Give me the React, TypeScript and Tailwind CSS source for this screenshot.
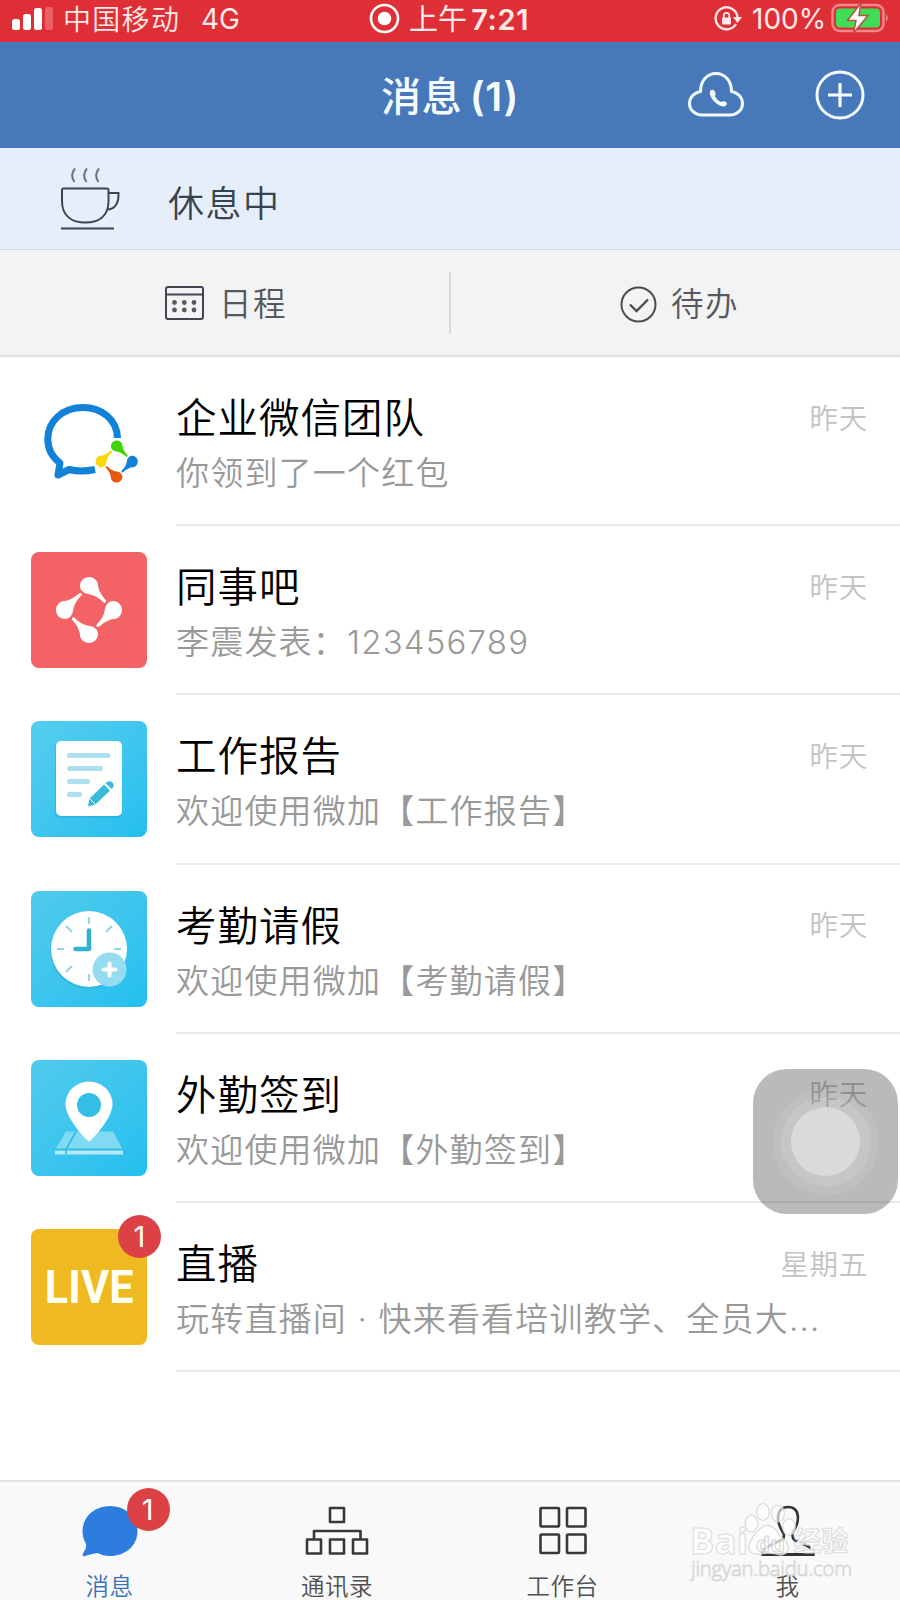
import type { ReactNode } from 'react'

type Chat = {
  title: string
  text: string
  time: string
  avatar: ReactNode
  badge?: number
}

const DROP = 'M0 -33 C5 -33 9 -29 9 -25 C9.500 -19 13 -14.500 16.800 -9.800 C17.800 -8 16 -6.300 14.500 -7.700 C10 -12.500 5 -15 0 -15.800 C-5 -16.500 -9 -19.500 -9 -24 C-9 -29 -5 -33 0 -33Z'

function TeamLogo() {
  return (
    <svg width="116" height="116" viewBox="0 0 116 116">
      <path d="M86.500 55 C86 36 70 24.500 52 24.500 C32 24.500 16.800 38 16.800 56 C16.800 66 21 74 29 80 L27 92 L38 86.500 Q50 89.500 64 86.500" fill="none" stroke="#1282d8" strokeWidth="7" strokeLinejoin="round" />
      <g transform="translate(85.700 78.500) scale(0.640)">
        <path d={DROP} fill="#3fd30a" />
        <path d={DROP} fill="#1282d8" transform="rotate(90)" />
        <path d={DROP} fill="#e8590f" transform="rotate(180)" />
        <path d={DROP} fill="#fbd80e" transform="rotate(270)" />
      </g>
    </svg>
  )
}

function ColleagueLogo() {
  return (
    <svg width="116" height="116" viewBox="0 0 116 116" className="rounded-lg bg-[#f36366]">
      <g fill="#fff" transform="translate(58 58)">
        <path d={DROP} />
        <path d={DROP} transform="rotate(90)" />
        <path d={DROP} transform="rotate(180)" />
        <path d={DROP} transform="rotate(270)" />
      </g>
    </svg>
  )
}

function ReportLogo() {
  return (
    <svg width="116" height="116" viewBox="0 0 116 116" className="rounded-lg bg-linear-to-br from-[#55cdee] to-[#22bfee]">
      <rect x="24" y="21" width="66" height="76" rx="5" fill="#1795bd" opacity="0.3" />
      <rect x="25" y="20" width="66" height="75" rx="5" fill="#fff" />
      <g stroke="#ace0ee" strokeWidth="5" strokeLinecap="round">
        <path d="M38.500 34.500H77M38.500 47.500H69.500M38.500 60.500H56.500M38.500 73.500H48.500" />
      </g>
      <path d="M57 85.500 L58.500 77.500 L73 63.500 L79 69.500 L64.500 83.500Z M74.500 62 q4.500 -3.500 7.500 0 q2 3.500 -1.500 6z" fill="#3bb9d8" />
      <path d="M58.500 77.500 l6 6" stroke="#fff" strokeWidth="1" />
    </svg>
  )
}

function ClockLogo() {
  return (
    <svg width="116" height="116" viewBox="0 0 116 116" className="rounded-lg bg-linear-to-br from-[#50cbed] to-[#22bfee]">
      <circle cx="57" cy="60" r="38" fill="#1795bd" opacity="0.25" />
      <circle cx="58" cy="58" r="38" fill="#fff" />
      <path d="M58 26v7M58 83v7M26 58h7M83 58h7M35 35l6 6M81 35l-6 6M35 81l6 -6" stroke="#8fd3e6" strokeWidth="1.800" />
      <path d="M58 39.500V58H44.500" fill="none" stroke="#2fb1d3" strokeWidth="4.500" strokeLinecap="round" strokeLinejoin="round" />
      <circle cx="78.500" cy="78.500" r="17" fill="#96dcf1" />
      <path d="M78.500 72.500v12M72.500 78.500h12" stroke="#fff" strokeWidth="4" strokeLinecap="round" />
    </svg>
  )
}

function PinLogo() {
  return (
    <svg width="116" height="116" viewBox="0 0 116 116" className="rounded-lg bg-linear-to-br from-[#50cbed] to-[#22bfee]">
      <path d="M35 71.500 H82 L92 90 V94 H24 V90Z" fill="#82daf2" />
      <path d="M24 90.500H92V94.500H24Z" fill="#b5e9f7" />
      <path d="M24 89.500H92M45 71.500L35 89.500V94.500" fill="none" stroke="#35bfe4" strokeWidth="1.800" />
      <path d="M58 81.500 C54 79 34.500 58 34.500 44 A23.500 22.500 0 0 1 81.500 44 C81.500 58 62 79 58 81.500Z" fill="#fff" />
      <circle cx="58" cy="45" r="12" fill="#35bfe4" />
    </svg>
  )
}

function LiveLogo() {
  return (
    <div className="flex size-[116px] items-center justify-center rounded-lg bg-[#eeb921] font-[Roboto,sans-serif] text-[47px] font-bold text-[#fffff4]">
      <span className="scale-x-[0.920]">LIVE</span>
    </div>
  )
}

const chats: Chat[] = [
  { title: '企业微信团队', text: '你领到了一个红包', time: '昨天', avatar: <TeamLogo /> },
  { title: '同事吧', text: '李震发表：123456789', time: '昨天', avatar: <ColleagueLogo /> },
  { title: '工作报告', text: '欢迎使用微加【工作报告】', time: '昨天', avatar: <ReportLogo /> },
  { title: '考勤请假', text: '欢迎使用微加【考勤请假】', time: '昨天', avatar: <ClockLogo /> },
  { title: '外勤签到', text: '欢迎使用微加【外勤签到】', time: '昨天', avatar: <PinLogo /> },
  { title: '直播', text: '玩转直播间 · 快来看看培训教学、全员大...', time: '星期五', avatar: <LiveLogo />, badge: 1 },
]

function Badge({ count }: { count: number }) {
  return (
    <span className="flex size-[43px] items-center justify-center rounded-full bg-[#dc4145] text-[29px] leading-none font-normal text-white">
      {count}
    </span>
  )
}

function StatusBar() {
  return (
    <div className="flex h-[42px] items-center bg-[#de2f37] text-[28px] leading-[38px] text-[#ffe9e9]">
      <svg width="42" height="24" viewBox="0 0 42 24" className="-mt-1 ml-3 shrink-0">
        <rect y="12" width="8" height="11" rx="2.500" fill="#fff" />
        <rect x="11" y="7" width="8" height="16" rx="2.500" fill="#fff" />
        <rect x="22" y="1" width="8" height="22" rx="2.500" fill="#fff" />
        <rect x="33" y="0" width="8" height="23" rx="2.500" fill="#e96166" />
      </svg>
      <span className="-mt-0.5 ml-[9px] w-[138px] shrink-0 font-[350] tracking-[1.300px] whitespace-nowrap">中国移动</span>
      <span className="-mt-1 w-[168px] shrink-0">4G</span>
      <svg width="31" height="31" viewBox="0 0 31 31" className="-mt-1.5 shrink-0">
        <circle cx="15.500" cy="15.500" r="13.500" fill="none" stroke="#fff" strokeWidth="2.600" />
        <circle cx="15.500" cy="15.500" r="6.800" fill="#fff" />
      </svg>
      <span className="-mt-0.5 ml-[9px] w-[309px] shrink-0 text-[29px] font-normal whitespace-nowrap">上午 <span className="-ml-1 font-semibold tracking-[0.700px]">7:21</span></span>
      <svg width="28" height="26" viewBox="0 0 28 26" className="-mt-1 -ml-1 shrink-0">
        <path d="M22 18 A11 11 0 1 1 23.500 11" fill="none" stroke="#ffe9e9" strokeWidth="2.300" />
        <path d="M19 11h9l-4.500 6z" fill="#ffe9e9" />
        <rect x="8" y="11.500" width="9" height="7" rx="1" fill="#ffe9e9" />
        <path d="M9.800 12V9.500a2.700 2.700 0 0 1 5.400 0V12" fill="none" stroke="#ffe9e9" strokeWidth="1.800" />
      </svg>
      <span className="-mt-1 ml-2.5 w-[79px] shrink-0">100%</span>
      <svg width="58" height="30" viewBox="0 0 58 30" className="-mt-1.5 shrink-0">
        <rect x="1.500" y="2" width="51" height="26" rx="7" fill="none" stroke="#f0878a" strokeWidth="2.500" />
        <rect x="5" y="5.500" width="44" height="19" rx="4" fill="#40de57" />
        <path d="M55 11 q3.500 4 0 8z" fill="#f0878a" />
        <path d="M30 0 L16.500 17.500H25L22.500 30L37 12.500H28Z" fill="#fff" stroke="#bd5140" strokeWidth="1.500" />
      </svg>
    </div>
  )
}

function Header() {
  return (
    <div className="grid h-[106px] grid-cols-[225px_1fr_225px] items-center bg-[#4778ba] text-[#f4fcff]">
      <span />
      <h1 className="pt-1 text-center text-[40px] leading-[60px] font-medium tracking-[0.700px]">消息 <span className="-ml-1 font-semibold">(1)</span></h1>
      <div className="flex items-center">
        <svg width="58" height="46" viewBox="0 0 58 46" fill="none" className="ml-3">
          <path d="M15 43H43 C50 43 55.500 38 55.500 31.500 C55.500 25 50.500 20.500 44.500 19.500 C44.500 9 38 1.500 29 1.500 C20 1.500 13.500 9 13.500 19.500 C7.500 20.500 2.500 25 2.500 31.500 C2.500 38 8 43 15 43Z" stroke="#f2fbff" strokeWidth="3" strokeLinejoin="round" />
          <path d="M23.500 18.500 Q26 16.500 28 19.500 Q29 22 28 24.500 Q30 28.500 34 30 Q36.500 28.500 39 30 Q41 32 38.500 34 Q35.500 35.500 31 32.500 Q25.500 29 23.500 24 Q22 20.500 23.500 18.500Z" fill="#f2fbff" />
        </svg>
        <svg width="50" height="50" viewBox="0 0 50 50" fill="none" stroke="#f2fbff" className="-mt-px ml-[70px]">
          <circle cx="25" cy="25" r="23" strokeWidth="3" />
          <path d="M25 13V37M13 25H37" strokeWidth="3.200" />
        </svg>
      </div>
    </div>
  )
}

function Tabs() {
  return (
    <div className="flex h-[107px] items-center border-b-2 border-[#dfdfdf] bg-[#f3f3f3] text-[32.500px] leading-[48px] font-[350] tracking-[1.500px] text-[#55585e]">
      <div className="flex h-[62px] w-[451px] items-center border-r-2 border-[#dadada] pl-[165px]">
        <svg width="39" height="34" viewBox="0 0 39 34" fill="none" stroke="#414550" strokeWidth="2" className="mr-[15px]">
          <rect x="1" y="1" width="37" height="32" rx="2" />
          <path d="M1 8.500H38" />
          <g fill="#555a62" stroke="none">
            <circle cx="9.500" cy="16.500" r="2.400" /><circle cx="19.300" cy="16.500" r="2.400" /><circle cx="29" cy="16.500" r="2.400" />
            <circle cx="9.500" cy="24" r="2.400" /><circle cx="19.300" cy="24" r="2.400" /><circle cx="29" cy="24" r="2.400" />
          </g>
        </svg>
        <span className="pt-[5px]">日程</span>
      </div>
      <div className="flex flex-1 items-center pl-[169px]">
        <svg width="37" height="37" viewBox="0 0 37 37" fill="none" stroke="#494c51" strokeWidth="2" className="mt-[3px] mr-[14px]">
          <circle cx="18.500" cy="18.500" r="17" />
          <path d="M10 18.500L16.500 25L28 13.500" strokeWidth="2.300" />
        </svg>
        <span className="pt-[5px]">待办</span>
      </div>
    </div>
  )
}

function ChatRow({ chat }: { chat: Chat }) {
  return (
    <div className="flex h-[169.200px] pl-[31px]">
      <div className="relative mt-[26px] size-[116px] shrink-0">
        {chat.avatar}
        {chat.badge && <div className="absolute -top-[14px] -right-[14px]"><Badge count={chat.badge} /></div>}
      </div>
      <div className="ml-[29px] flex-1 border-b-2 border-[#ebebeb] pt-[32px]">
        <div className="flex items-center justify-between pr-[32px]">
          <h2 className="text-[40.500px] leading-[60px] font-[350] tracking-[1px] text-black">{chat.title}</h2>
          <span className="text-[28.500px] font-[350] tracking-[0.700px] text-[#c3c3c3]">{chat.time}</span>
        </div>
        <p className="-mt-0.5 text-[33px] leading-[52px] font-[350] tracking-[1.200px] whitespace-nowrap text-[#999]">{chat.text}</p>
      </div>
    </div>
  )
}

function Watermark() {
  return (
    <div className="pointer-events-none absolute bottom-0 left-[688px] h-[100px] w-[168px] font-[Open_Sans,sans-serif] opacity-90">
      <svg width="168" height="100" viewBox="0 0 168 100" fill="#fff" stroke="#d9d9d9" strokeWidth="1.300" className="absolute">
        <ellipse cx="63.500" cy="23.500" rx="6.300" ry="8.300" fillOpacity="0.800" />
        <ellipse cx="75" cy="12" rx="6.300" ry="8.300" fillOpacity="0.800" />
        <ellipse cx="90" cy="13.500" rx="6.500" ry="8.300" fillOpacity="0.700" />
        <ellipse cx="101" cy="27" rx="6.300" ry="8.300" fillOpacity="0.800" />
        <path d="M70 31 Q79 20 88 30 Q91 36 98 41 Q104 53 93 55 Q81 52 73 54 Q60 56 61 45 Q63 38 70 31Z" fillOpacity="0.800" />
      </svg>
      <span className="absolute top-[15px] left-[2px] text-[36px] leading-[52px] font-bold text-white [-webkit-text-stroke:1px_#d8d8d8]">Bai</span>
      <span className="absolute top-[26px] left-[68px] text-[22px] leading-[34px] font-bold text-white [-webkit-text-stroke:1px_#cfcfcf]">du</span>
      <span className="absolute top-[20px] left-[106px] font-['Noto_Sans_CJK_SC',sans-serif] text-[27px] leading-[40px] font-bold whitespace-nowrap text-white [-webkit-text-stroke:1px_#d8d8d8]">经验</span>
      <span className="absolute top-[53px] left-[3px] text-[20.300px] leading-[30px] tracking-[-0.200px] whitespace-nowrap text-white [-webkit-text-stroke:0.800px_#d2d2d2]">jingyan.baidu.com</span>
    </div>
  )
}

function BottomNav() {
  return (
    <nav className="relative mt-auto grid h-[120px] grid-cols-4 border-t-2 border-[#e3e3e3] bg-[#f9f9f9] text-[23.500px] leading-[36px] font-[350] tracking-[0.500px] text-[#505050]">
      <div className="flex flex-col items-center pt-[23px] pr-1.5 text-[#3a72b8]">
        <div className="relative">
          <svg width="56" height="52" viewBox="0 0 56 52" className="mb-[12px]">
            <path d="M28 1 C43.500 1 55.500 12 55.500 26 C55.500 41 43 51 28 51 Q21 51 15.500 48 Q9 49 3 51 Q-.5 52 1 48.500 Q5 43 4 39 Q.5 33 .5 26 C.5 12 12.500 1 28 1Z" fill="#2c7ddd" />
          </svg>
          <div className="absolute -top-[17px] left-[45px]"><Badge count={1} /></div>
        </div>
        消息
      </div>
      <div className="flex flex-col items-center pt-[23px] pr-px">
        <svg width="64" height="52" viewBox="0 0 64 52" fill="none" stroke="#383838" strokeWidth="2.600" strokeLinejoin="round" className="mb-[12px]">
          <rect x="25" y="3" width="14" height="14" />
          <rect x="2" y="34.500" width="14" height="14" />
          <rect x="25" y="34.500" width="14" height="14" />
          <rect x="48" y="34.500" width="14" height="14" />
          <path d="M9 34V26H55.500V34" />
        </svg>
        通讯录
      </div>
      <div className="flex flex-col items-center pt-[23px]">
        <svg width="48" height="52" viewBox="0 0 48 52" fill="none" stroke="#383838" strokeWidth="2.600" strokeLinejoin="round" className="mb-[12px]">
          <rect x="1.500" y="3" width="18.500" height="18.500" rx="1" />
          <rect x="28" y="3" width="18.500" height="18.500" rx="1" />
          <rect x="1.500" y="29.500" width="18.500" height="18.500" rx="1" />
          <rect x="28" y="29.500" width="18.500" height="18.500" rx="1" />
        </svg>
        工作台
      </div>
      <div className="flex flex-col items-center pt-[23px]">
        <svg width="54" height="52" viewBox="0 0 54 52" fill="none" stroke="#333" strokeWidth="2.500" className="mb-[12px]">
          <path d="M1.500 49.500V46 Q5 42 13 38.500 L20.500 35 Q24 33 22.500 28.500 Q17 20 17 12.500 Q17.500 2 27 2 Q36.500 2 37 12.500 Q37 20 32 27 Q30 32 34 35.500 L41 38.500 Q50 42 52.500 46V49.500Z" />
          <path d="M1 49.500H53" strokeWidth="3" />
        </svg>
        我
      </div>
      <Watermark />
    </nav>
  )
}

export default function App() {
  return (
    <div className="relative flex h-[1600px] w-[900px] flex-col overflow-hidden bg-white font-[Inter,'Noto_Sans_CJK_SC',sans-serif]">
      <StatusBar />
      <Header />

      {/* Current status */}
      <div className="flex h-[102px] items-center border-b border-[#cfd9e7] bg-[#e6eef9] text-[36px] leading-[54px] font-[350] tracking-[1.500px] text-[#36444f]">
        <svg width="60" height="64" viewBox="0 0 60 64" fill="none" stroke="#3d464e" strokeWidth="2" className="mr-[48px] ml-[60px]">
          <path d="M15 1.500 Q9.500 8 14.500 15M27 1.500Q21.500 8 26.500 15M39 1.500Q33.500 8 38.500 15" stroke="#6d757c" />
          <path d="M2 23 Q2 21.500 3.500 21.500H47Q48.500 21.500 48.500 23V34 C48.500 50 38 55.500 25.500 55.500 C13 55.500 2 50 2 34Z" />
          <path d="M48.500 26H58.500C59 36 55 42.500 47 42.500M1 61.500H54" />
        </svg>
        <span className="pt-[10px]">休息中</span>
      </div>

      <Tabs />

      {/* Conversations */}
      <div>
        {chats.map((chat) => <ChatRow key={chat.title} chat={chat} />)}
      </div>

      <BottomNav />

      {/* Floating touch button */}
      <div className="absolute top-[1069px] left-[753px] flex size-[145px] items-center justify-center rounded-[34px] bg-black/27">
        <div className="flex size-[106px] items-center justify-center rounded-full bg-white/8">
          <div className="flex size-[90px] items-center justify-center rounded-full bg-white/12">
            <div className="size-[69px] rounded-full bg-white/35" />
          </div>
        </div>
      </div>
    </div>
  )
}
